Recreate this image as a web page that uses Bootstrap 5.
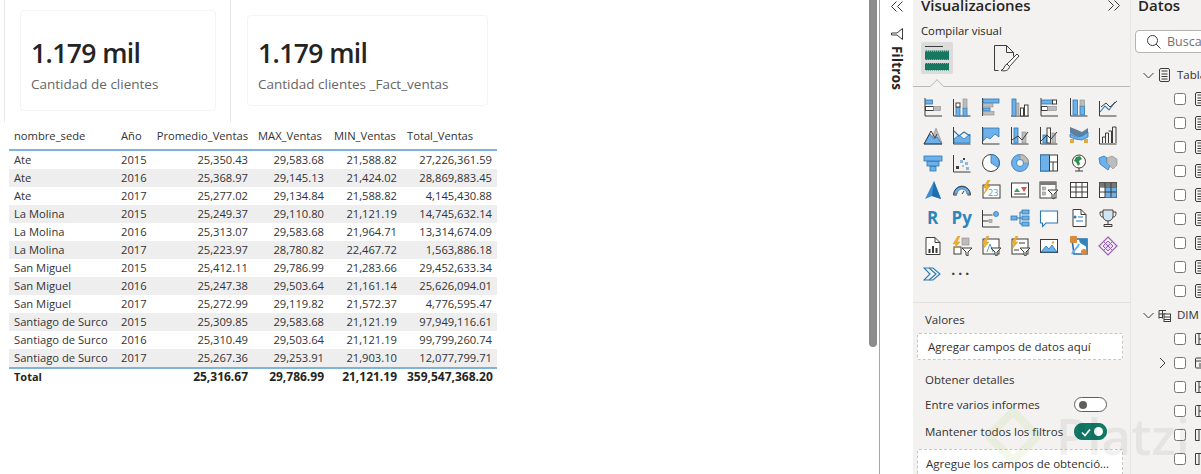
<!DOCTYPE html>
<html lang="es">
<head>
<meta charset="UTF-8">
<title>Power BI</title>
<link href="https://cdn.jsdelivr.net/npm/bootstrap@5.3.3/dist/css/bootstrap.min.css" rel="stylesheet">
<style>
    html, body { height: 474px; overflow: hidden; }
    body { font-family: "Open Sans", "Noto Sans", sans-serif; color: #252423; background: #fff; position: relative; }
    .app-wrap { height: 474px; }
    .report-area { width: 869px; height: 474px; }
    .kpi-row { height: 122px; }
    .kpi-cell-a { width: 227px; margin-left: 4px; padding: 10px 0 0 15px; border-left: 1px solid #e8e8e8; border-right: 1px solid #e4e4e4; }
    .kpi-cell-b { padding: 15px 0 0 16px; }
    .kpi-box { border: 1px solid #f4f4f4; border-radius: 4px; padding-left: 10px; }
    .kpi-cell-a .kpi-box { width: 196px; height: 101px; padding-top: 22px; }
    .kpi-cell-b .kpi-box { width: 241px; height: 91px; padding-top: 17px; }
    .kpi-num { font-size: 26.5px; line-height: 40px; font-weight: 600; color: #252423; letter-spacing: -.6px; }
    .kpi-label { font-size: 13.5px; line-height: 20px; color: #666; margin-top: 1px; }
    .sales-table { margin: 1px 0 0 9px; width: 488px; table-layout: fixed; border-collapse: collapse; font-size: 11.2px; color: #333; }
    .sales-table th, .sales-table td { padding: 0 5px; height: 18px; line-height: 18px; white-space: nowrap; border: 0; font-weight: 400; background: transparent; color: #333; box-shadow: none; }
    .sales-table thead th { height: 27px; border-bottom: 2px solid #7fb4da; padding-bottom: 0; }
    .sales-table tbody tr:nth-child(even) td { background: #eee; }
    .sales-table tfoot td { font-size: 12px; font-weight: 700; height: 16px; line-height: 15px; border-top: 2px solid #7fb4da; color: #252423; }
    .sales-table tfoot td:first-child { font-size: 11px; }
    .sales-table .w-a { width: 107px; }
    .sales-table .w-b { width: 35px; }
    .sales-table .w-c { width: 102px; }
    .sales-table .w-d { width: 76px; }
    .sales-table .w-e { width: 73px; }
    .sales-table .w-f { width: 95px; }
    .scroll-track { width: 10px; }
    .scroll-thumb { width: 8px; height: 347px; background: #8c8c8c; border-radius: 0 0 4px 4px; }
    .filter-strip { width: 34px; border-left: 1px solid #a6a6a6; }
    .strip-top { height: 11px; line-height: 10px; text-align: center; }
    .filter-word { writing-mode: vertical-rl; font-size: 13.5px; font-weight: 700; color: #252423; margin: 5px 0 0 9px; line-height: 16px; letter-spacing: .2px; }
    .viz-pane { width: 217px; background: #f3f2f1; position: relative; }
    .pane-title { font-size: 15px; line-height: 10px; height: 10px; font-weight: 600; color: #252423; }
    .viz-head { padding-left: 8px; padding-right: 9px; }
    .build-label { font-size: 11.3px; font-weight: 500; line-height: 16px; margin: 12px 0 3px 8px; }
    .build-tabs { height: 44px; margin-left: 8px; border: 0; }
    .tab-on { width: 32px; height: 32px; background: #dcdcdc; border-radius: 2px; }
    .tab-off { margin-left: 36px; width: 32px; height: 32px; }
    .tab-rule { height: 1px; background: #b9b9b9; position: relative; }
    .tab-caret { position: absolute; left: 18px; top: -6px; width: 12px; height: 12px; background: #f3f2f1; border-left: 1px solid #b9b9b9; border-top: 1px solid #b9b9b9; transform: rotate(45deg) scale(.8); }
    .viz-grid { display: grid; grid-template-columns: repeat(7, 29.2px); grid-auto-rows: 27.85px; margin: 6px 0 0 5px; height: 209px; border-bottom: 0; }
    .viz-grid > div { display: flex; align-items: center; justify-content: center; }
    .viz-ico { width: 20px; height: 20px; }
    .k { fill: none; stroke: #3d3c3b; stroke-width: 1; }
    .bl { fill: #6db0ea; stroke: #2b79b5; stroke-width: .8; }
    .gr { fill: #bcbcbc; stroke: #8b8b8b; stroke-width: .6; }
    .dk { fill: #3d3c3b; }
    .yl { fill: #f2b02e; stroke: #c88a12; stroke-width: .4; }
    .ws { fill: #fff; stroke: #3d3c3b; stroke-width: 1; }
    .bs { fill: none; stroke: #2b79b5; stroke-width: 1.1; }
    .r-ico { font-size: 17px; font-weight: 700; color: #2f84b9; line-height: 20px; font-family: "Open Sans", sans-serif; }
    .more-dots { font-size: 14px; font-weight: 700; color: #3d3c3b; letter-spacing: 3px; line-height: 14px; white-space: nowrap; }
    .sec-rule { height: 1px; background: #e1e0df; }
    .field-title { font-size: 11.5px; line-height: 16px; margin: 9px 0 5px 12px; color: #323130; }
    .drop-box { margin: 0 7px 0 4px; height: 27px; line-height: 26px; background: #fff; border: 1px dashed #c8c6c4; border-radius: 2px; font-size: 11.5px; padding-left: 10px; color: #323130; white-space: nowrap; overflow: hidden; }
    .detail-title { font-weight: 500; margin: 12px 0 0 12px; }
    .switch-row { height: 27px; margin: 0 23px 0 12px; font-size: 11.5px; color: #323130; }
    .switch-row.first { margin-top: 3px; }
    .tgl { width: 33px; height: 15px; border-radius: 8px; border: 1px solid #605e5c; background: #fff; position: relative; }
    .tgl::after { content: ""; position: absolute; left: 4px; top: 2.5px; width: 8px; height: 8px; border-radius: 50%; background: #605e5c; }
    .tgl-on { background: #117865; border-color: #117865; height: 17px; }
    .tgl-on::after { left: auto; right: 3px; top: 3px; width: 9px; height: 9px; background: #fff; }
    .tgl-on svg { position: absolute; left: 6px; top: 3.5px; width: 10px; height: 9px; }
    .last-box { margin-top: 4px; height: 40px; line-height: 27px; padding-left: 8px; }
    .data-pane { width: 71px; background: #f3f2f1; border-left: 1px solid #e6e5e4; overflow: hidden; }
    .data-pane .pane-title { margin-left: 7px; }
    .search-box { margin: 20px -20px 0 4px; height: 23px; background: #fff; border: 1px solid #b5b3b1; border-radius: 4px; font-size: 12.5px; color: #707070; line-height: 21px; padding-left: 10px; white-space: nowrap; }
    .search-box svg { width: 15px; height: 15px; margin-right: 6px; vertical-align: -3px; }
    .tree-list { margin-top: 10px; white-space: nowrap; font-size: 11.5px; color: #323130; }
    .tree-row { height: 24px; }
    .tree-head { padding-left: 12px; }
    .tree-head span { margin-left: 2px; }
    .tree-sub { padding-left: 43px; }
    .tree-sub.has-arrow { padding-left: 28px; }
    .sub-arrow { width: 7px; height: 12px; flex: none; }
    .tree-mark { width: 12px; height: 12px; margin: 0; border: 1px solid #8a8886; border-radius: 2px; background: #f8f8f8; flex: none; }
    .tree-ico { width: 13px; height: 14px; flex: none; }
    .tree-arrow { width: 11px; height: 11px; flex: none; }
    .mark-over { position: absolute; pointer-events: none; color: #000; opacity: .05; font-size: 51px; font-weight: 600; line-height: 58px; left: 1056px; top: 406px; white-space: nowrap; }
    .diamond-over { position: absolute; left: 985px; top: 408px; width: 56px; height: 56px; pointer-events: none; opacity: .1; }
</style>
</head>
<body>
<div class="d-flex app-wrap">
    <div class="report-area">
        <div class="d-flex kpi-row">
            <div class="kpi-cell-a">
                <div class="kpi-box">
                    <div class="kpi-num">1.179 mil</div>
                    <div class="kpi-label">Cantidad de clientes</div>
                </div>
            </div>
            <div class="kpi-cell-b">
                <div class="kpi-box">
                    <div class="kpi-num">1.179 mil</div>
                    <div class="kpi-label">Cantidad clientes _Fact_ventas</div>
                </div>
            </div>
        </div>
        <table class="sales-table">
            <thead>
                <tr>
                    <th class="w-a">nombre_sede</th>
                    <th class="w-b">Año</th>
                    <th class="w-c text-end">Promedio_Ventas</th>
                    <th class="w-d">MAX_Ventas</th>
                    <th class="w-e">MIN_Ventas</th>
                    <th class="w-f">Total_Ventas</th>
                </tr>
            </thead>
            <tbody class="text-end">
                <tr><td class="text-start">Ate</td><td class="text-start">2015</td><td>25,350.43</td><td>29,583.68</td><td>21,588.82</td><td>27,226,361.59</td></tr>
                <tr><td class="text-start">Ate</td><td class="text-start">2016</td><td>25,368.97</td><td>29,145.13</td><td>21,424.02</td><td>28,869,883.45</td></tr>
                <tr><td class="text-start">Ate</td><td class="text-start">2017</td><td>25,277.02</td><td>29,134.84</td><td>21,588.82</td><td>4,145,430.88</td></tr>
                <tr><td class="text-start">La Molina</td><td class="text-start">2015</td><td>25,249.37</td><td>29,110.80</td><td>21,121.19</td><td>14,745,632.14</td></tr>
                <tr><td class="text-start">La Molina</td><td class="text-start">2016</td><td>25,313.07</td><td>29,583.68</td><td>21,964.71</td><td>13,314,674.09</td></tr>
                <tr><td class="text-start">La Molina</td><td class="text-start">2017</td><td>25,223.97</td><td>28,780.82</td><td>22,467.72</td><td>1,563,886.18</td></tr>
                <tr><td class="text-start">San Miguel</td><td class="text-start">2015</td><td>25,412.11</td><td>29,786.99</td><td>21,283.66</td><td>29,452,633.34</td></tr>
                <tr><td class="text-start">San Miguel</td><td class="text-start">2016</td><td>25,247.38</td><td>29,503.64</td><td>21,161.14</td><td>25,626,094.01</td></tr>
                <tr><td class="text-start">San Miguel</td><td class="text-start">2017</td><td>25,272.99</td><td>29,119.82</td><td>21,572.37</td><td>4,776,595.47</td></tr>
                <tr><td class="text-start">Santiago de Surco</td><td class="text-start">2015</td><td>25,309.85</td><td>29,583.68</td><td>21,121.19</td><td>97,949,116.61</td></tr>
                <tr><td class="text-start">Santiago de Surco</td><td class="text-start">2016</td><td>25,310.49</td><td>29,503.64</td><td>21,121.19</td><td>99,799,260.74</td></tr>
                <tr><td class="text-start">Santiago de Surco</td><td class="text-start">2017</td><td>25,267.36</td><td>29,253.91</td><td>21,903.10</td><td>12,077,799.71</td></tr>
            </tbody>
            <tfoot class="text-end">
                <tr><td class="text-start">Total</td><td></td><td>25,316.67</td><td>29,786.99</td><td>21,121.19</td><td>359,547,368.20</td></tr>
            </tfoot>
        </table>
    </div>

    <div class="scroll-track"><div class="scroll-thumb"></div></div>

    <div class="filter-strip">
        <div class="strip-top">
            <svg width="14" height="11" viewBox="0 0 14 11"><path class="k" d="M6.5 .5l-5 5 5 5M12.5 .5l-5 5 5 5"/></svg>
        </div>
        <svg class="d-block mx-auto mt-3" width="14" height="14" viewBox="0 0 14 14"><path class="k" d="M12.5 1.500v11L7 8H1.500V6H7z"/></svg>
        <div class="filter-word">Filtros</div>
    </div>

    <div class="viz-pane">
        <div class="d-flex justify-content-between align-items-start viz-head">
            <div class="pane-title">Visualizaciones</div>
            <svg width="14" height="11" viewBox="0 0 14 11"><path class="k" d="M1.5 .5l5 5-5 5M7.5 .5l5 5-5 5"/></svg>
        </div>
        <div class="build-label">Compilar visual</div>
        <div class="d-flex build-tabs">
            <div class="tab-on">
                <svg width="32" height="32" viewBox="0 0 32 32"><path class="k" d="M4 4.500h18"/><rect x="4" y="8.500" width="24" height="9.500" fill="#17775f"/><rect x="4" y="21" width="24" height="7.500" fill="#17775f"/><path d="M4 9h24M4 18h24M4 21h24M4 28.500h24" stroke="#dcdcdc" stroke-dasharray="1 1"/></svg>
            </div>
            <div class="tab-off">
                <svg width="32" height="32" viewBox="0 0 32 32"><path class="k" d="M5.500 3.500h12l7 7v4M17.500 3.500v7h7M5.500 3.500v25h4"/><path class="ws" d="M28 12L18 22l2.500 2.500L30 14z"/><path class="k" d="M18 22c-3 1-2 5-6 6.500 4 1 8 0 8.500-4"/></svg>
            </div>
        </div>
        <div class="tab-rule"><span class="tab-caret"></span></div>

        <div class="viz-grid">
            <div><svg class="viz-ico" viewBox="0 0 20 20"><path class="k" d="M2 1v18h17"/><rect class="bl" x="2.500" y="3" width="7" height="4"/><rect class="ws" x="2.500" y="9.500" width="8" height="4"/><rect class="gr" x="10.500" y="9.500" width="7" height="4"/></svg></div>
            <div><svg class="viz-ico" viewBox="0 0 20 20"><path class="k" d="M1.500 2v17h17"/><rect class="bl" x="4" y="10" width="4" height="9"/><rect class="ws" x="4" y="6" width="4" height="4"/><rect class="bl" x="11" y="11" width="4" height="8"/><rect class="gr" x="11" y="2" width="4" height="9"/></svg></div>
            <div><svg class="viz-ico" viewBox="0 0 20 20"><path class="k" d="M1.500 1v18"/><rect class="bl" x="2" y="2" width="16" height="4"/><rect class="gr" x="2" y="6.500" width="10" height="3.500"/><rect class="bl" x="2" y="11" width="7" height="3"/><rect class="gr" x="2" y="14.500" width="11" height="3.500"/></svg></div>
            <div><svg class="viz-ico" viewBox="0 0 20 20"><path class="k" d="M1 19h18"/><rect class="bl" x="2" y="2" width="4" height="17"/><rect class="gr" x="6.500" y="6" width="2.500" height="13"/><rect class="ws" x="10.500" y="11" width="3" height="8"/><rect class="ws" x="14.500" y="8" width="3.500" height="11"/></svg></div>
            <div><svg class="viz-ico" viewBox="0 0 20 20"><path class="k" d="M2 1v18h17"/><rect class="bl" x="2.500" y="3" width="11" height="4"/><rect class="ws" x="13.500" y="3" width="4" height="4"/><rect class="ws" x="2.500" y="9.500" width="6" height="4"/><rect class="gr" x="8.500" y="9.500" width="9" height="4"/></svg></div>
            <div><svg class="viz-ico" viewBox="0 0 20 20"><path class="k" d="M1.500 1v18h17"/><rect class="bl" x="4" y="3" width="4.500" height="15"/><rect class="bl" x="11" y="9" width="4.500" height="9"/><rect class="gr" x="11" y="3" width="4.500" height="6"/></svg></div>
            <div><svg class="viz-ico" viewBox="0 0 20 20"><path class="k" d="M1.500 4v15h17"/><path class="bs" d="M2 15l5-6 4 4 6-8"/><path class="k" d="M3 10l5-4 4 4 7-6"/></svg></div>

            <div><svg class="viz-ico" viewBox="0 0 20 20"><path class="gr" d="M7 18l6-15 6 15z"/><path class="bl" d="M1 19l6-10 4 5 3-2 5 7z"/><path class="k" d="M1 19l7-13 4 7 2-4M1 19h18"/></svg></div>
            <div><svg class="viz-ico" viewBox="0 0 20 20"><path class="k" d="M1.500 2v17h17"/><path class="bl" d="M2 14l5-4 5 4 6-5v9H2z"/><path class="bs" d="M2 6l5 5 5-4 6 4"/></svg></div>
            <div><svg class="viz-ico" viewBox="0 0 20 20"><path class="k" d="M1.500 2v17h17"/><path class="bl" d="M2 3h16v9l-4-3-5 5-3-2-4 4z"/></svg></div>
            <div><svg class="viz-ico" viewBox="0 0 20 20"><path class="k" d="M1.500 2v17h17"/><rect class="bl" x="4" y="3" width="4" height="15"/><rect class="gr" x="12" y="7" width="4" height="11"/><path class="k" d="M2 15l6-4 4 4 6-8"/></svg></div>
            <div><svg class="viz-ico" viewBox="0 0 20 20"><path class="k" d="M1.500 2v17h17"/><rect class="bl" x="4" y="10" width="3.500" height="8"/><rect class="ws" x="8" y="3" width="3.500" height="15"/><rect class="gr" x="13" y="8" width="3.500" height="10"/><path class="k" d="M2 16l6-6 4 4 6-7"/></svg></div>
            <div><svg class="viz-ico" viewBox="0 0 20 20"><path d="M1 2l5 2 7 3 6-4v5l-6 5-7-2-5-3z" fill="#5f7fa0"/><path class="bl" d="M1 9l6 3 6-1 6-4v5l-6 3-7-1-5-2z"/><rect x="1" y="14" width="4" height="4" fill="#e2a93b"/><rect x="15" y="14" width="4" height="4" fill="#e2a93b"/></svg></div>
            <div><svg class="viz-ico" viewBox="0 0 20 20"><path class="k" d="M1.500 3v16M1.500 19h17M4.500 18v-6h3v6M7.500 12V8h3v10M10.500 6h3v12M14.500 18V2h3.500v16"/></svg></div>

            <div><svg class="viz-ico" viewBox="0 0 20 20"><rect class="bl" x="1" y="3" width="18" height="5"/><rect class="bl" x="4" y="8.500" width="12" height="4.500"/><rect class="bl" x="7" y="13.500" width="6" height="4.500"/></svg></div>
            <div><svg class="viz-ico" viewBox="0 0 20 20"><path class="k" d="M1.500 2v17h17"/><rect class="dk" x="4" y="13" width="3" height="3"/><rect class="dk" x="11" y="5" width="2" height="2"/><rect fill="#8db8dc" x="8" y="7" width="3" height="3"/><rect fill="#8db8dc" x="13" y="9" width="3" height="3"/><rect fill="#8db8dc" x="14" y="14" width="3" height="3"/><rect fill="#bbb" x="10" y="12" width="2" height="2"/></svg></div>
            <div><svg class="viz-ico" viewBox="0 0 20 20"><circle class="ws" cx="10" cy="10" r="8.500"/><path class="bl" d="M10 10V1.500a8.500 8.500 0 0 1 7 13z"/></svg></div>
            <div><svg class="viz-ico" viewBox="0 0 20 20"><circle class="bl" cx="10" cy="10" r="8.500"/><path class="gr" d="M10 1.500a8.500 8.500 0 0 1 8.500 8.500h-5a3.500 3.500 0 0 0-3.500-3.500z"/><circle fill="#f3f2f1" stroke="#2b79b5" stroke-width=".8" cx="10" cy="10" r="3.500"/></svg></div>
            <div><svg class="viz-ico" viewBox="0 0 20 20"><rect class="ws" x="1.500" y="2" width="17" height="16"/><rect class="bl" x="1.500" y="2" width="9" height="16"/><path class="k" d="M10.500 9h8M14 9v9M10.500 2v16"/></svg></div>
            <div><svg class="viz-ico" viewBox="0 0 20 20"><circle cx="10" cy="8.500" r="6.500" fill="#fff" stroke="#3d3c3b"/><path d="M7 4l4-1 2 3-3 2 1 3-2 2-2-4-2-1z" fill="#2f8f4f"/><path class="k" d="M6 18h8M10 15v3"/></svg></div>
            <div><svg class="viz-ico" viewBox="0 0 20 20"><path class="bl" d="M1 5l5-2 3 2v5l3 3-2 4-4-3-4-3z"/><path class="gr" d="M9 5l5-2 5 3v6l-4 4-3-3-3-3z"/></svg></div>

            <div><svg class="viz-ico" viewBox="0 0 20 20"><path d="M11 1L2 19l7-3 9 3z" fill="#3f8fd0"/><path d="M11 1L9 16l9 3z" fill="#1f6fae"/></svg></div>
            <div><svg class="viz-ico" viewBox="0 0 20 20"><path class="bl" d="M2 14a8 8 0 0 1 16 0h-3a5 5 0 0 0-10 0z"/><path class="k" d="M1.500 15a8.500 8.500 0 0 1 17 0h-3M5 15H1.500M10 14l2-3"/></svg></div>
            <div><svg class="viz-ico" viewBox="0 0 20 20"><rect class="ws" x="2" y="5" width="17" height="13"/><path class="yl" d="M7 0L2 8h3l-2 6 6-8H6l3-6z"/><text x="7" y="16" font-size="9" fill="#5e9cc9" font-family="Open Sans, sans-serif">23</text></svg></div>
            <div><svg class="viz-ico" viewBox="0 0 20 20"><rect class="ws" x="1.500" y="3" width="17" height="14"/><path d="M4 12l3-4 3 4z" fill="#3f9e5d"/><path d="M11 7h6l-3 5z" fill="#d9534f"/><path class="k" d="M4 14h12"/></svg></div>
            <div><svg class="viz-ico" viewBox="0 0 20 20"><rect class="ws" x="1" y="2" width="16" height="16"/><rect x="1" y="2" width="16" height="3" fill="#7a7a7a"/><rect class="gr" x="3.500" y="7" width="3" height="3"/><rect class="gr" x="3.500" y="12" width="3" height="3"/><path class="ws" d="M9 10h10l-4 4v5l-2-1v-4z"/></svg></div>
            <div><svg class="viz-ico" viewBox="0 0 20 20"><rect class="ws" x="1.500" y="2.500" width="17" height="15"/><path class="k" d="M1.500 7h17M1.500 12h17M7 2.500v15M13 2.500v15"/></svg></div>
            <div><svg class="viz-ico" viewBox="0 0 20 20"><rect class="ws" x="1.500" y="2.500" width="17" height="15"/><rect x="7" y="7" width="11.500" height="10.500" fill="#6db0ea"/><rect x="1.500" y="2.500" width="17" height="4" fill="#777"/><path class="k" d="M1.500 7h17M1.500 12h17M7 2.500v15M13 2.500v15"/></svg></div>

            <div><span class="r-ico">R</span></div>
            <div><span class="r-ico">Py</span></div>
            <div><svg class="viz-ico" viewBox="0 0 20 20"><path class="k" d="M1.500 2v17h17M1.500 7h10M1.500 13h6"/><circle class="bl" cx="15" cy="6" r="2.500"/><rect class="gr" x="8" y="11.500" width="3" height="3"/></svg></div>
            <div><svg class="viz-ico" viewBox="0 0 20 20"><rect class="bl" x="1" y="8" width="6" height="4"/><rect class="bl" x="12" y="2" width="7" height="4"/><rect class="bl" x="12" y="8" width="7" height="4"/><rect class="bl" x="12" y="14" width="7" height="4"/><path class="bs" d="M7 10h5M10 4h2M10 16h2M10 4v12"/></svg></div>
            <div><svg class="viz-ico" viewBox="0 0 20 20"><path d="M1.500 3h17v12H7l-3.500 3.500V15h-2z" fill="#fff" stroke="#2b79b5" stroke-width="1.100"/></svg></div>
            <div><svg class="viz-ico" viewBox="0 0 20 20"><path class="ws" d="M4 1.500h8l5 5v12H4z"/><path class="k" d="M12 1.500v5h5"/><circle fill="#2b79b5" cx="6" cy="9" r="1.500"/><path class="bs" d="M9 9h5M7 13h7"/></svg></div>
            <div><svg class="viz-ico" viewBox="0 0 20 20"><path d="M6 3h8v5a4 4 0 0 1-8 0z" fill="#cfe4f5"/><path class="k" d="M5 2h10v6a5 5 0 0 1-10 0zM5 4H2c0 4 1 5 3 5M15 4h3c0 4-1 5-3 5M10 13v3M6 18.500h8v-2H6z"/></svg></div>

            <div><svg class="viz-ico" viewBox="0 0 20 20"><path class="ws" d="M3 1.500h9l5 5v12H3z"/><path class="k" d="M12 1.500v5h5"/><rect class="dk" x="5.500" y="13" width="2" height="4"/><rect class="dk" x="9" y="10" width="2" height="7"/><rect class="dk" x="12.500" y="12" width="2" height="5"/></svg></div>
            <div><svg class="viz-ico" viewBox="0 0 20 20"><rect class="gr" x="10" y="2" width="7" height="7"/><rect class="ws" x="2" y="11" width="7" height="7"/><path class="yl" d="M6 0L1 8h3l-2 5 6-7H5l3-6z"/><path class="ws" d="M10 12h10l-4 4v4l-2-1v-3z"/></svg></div>
            <div><svg class="viz-ico" viewBox="0 0 20 20"><rect class="ws" x="2" y="3" width="16" height="15"/><path class="yl" d="M6 0L1 8h3l-2 5 6-7H5l3-6z"/><path d="M6 16l3-8 3 8" fill="none" stroke="#5e9cc9"/><path class="ws" d="M10 12h10l-4 4v4l-2-1v-3z"/></svg></div>
            <div><svg class="viz-ico" viewBox="0 0 20 20"><rect class="ws" x="2" y="3" width="16" height="15"/><path class="yl" d="M6 0L1 8h3l-2 5 6-7H5l3-6z"/><path class="k" d="M9 7h6M4 14h5"/><path class="ws" d="M10 12h10l-4 4v4l-2-1v-3z"/></svg></div>
            <div><svg class="viz-ico" viewBox="0 0 20 20"><rect class="ws" x="1.500" y="3.500" width="17" height="13"/><path class="bl" d="M2 16l5-6 3 3 3-4 5 7z"/><circle cx="14" cy="6.500" r="1.200" fill="#e2a93b"/></svg></div>
            <div><svg class="viz-ico" viewBox="0 0 20 20"><path d="M3 3h15v15H5z" fill="#fff" stroke="#1f6fae" stroke-width="1.600"/><path d="M10 3c0 6 6 5 8 9v-9z" fill="#2f84b9"/><path d="M3 18c2-5 6-6 7-10" stroke="#6db0ea" stroke-width="2" fill="none"/><rect x="1" y="0" width="7" height="7" rx="1" fill="#d98a3d"/><circle cx="15" cy="16" r="3" fill="#d98a3d"/></svg></div>
            <div><svg class="viz-ico" viewBox="0 0 20 20"><path d="M10 1l9 9-9 9-9-9z" fill="none" stroke="#9a5fb5" stroke-width="1.200"/><path d="M10 5l5 5-5 5-5-5z" fill="#e8d5f0" stroke="#9a5fb5"/><path d="M5.500 5.500l9 9M14.500 5.500l-9 9" stroke="#9a5fb5"/></svg></div>

            <div><svg class="viz-ico" viewBox="0 0 20 20"><path class="bs" d="M1 4h9l7 6-7 6H1l6-6z"/><path class="bs" d="M6 4l7 6-7 6"/></svg></div>
            <div><span class="more-dots">···</span></div>
        </div>

        <div class="sec-rule"></div>
        <div class="field-title">Valores</div>
        <div class="drop-box">Agregar campos de datos aquí</div>
        <div class="field-title detail-title">Obtener detalles</div>
        <div class="d-flex justify-content-between align-items-center switch-row first">
            <span>Entre varios informes</span><span class="tgl"></span>
        </div>
        <div class="d-flex justify-content-between align-items-center switch-row">
            <span>Mantener todos los filtros</span>
            <span class="tgl tgl-on"><svg viewBox="0 0 10 9"><path d="M1 4.500l3 3 5-6" fill="none" stroke="#fff" stroke-width="1.600"/></svg></span>
        </div>
        <div class="drop-box last-box">Agregue los campos de obtenció...</div>
    </div>

    <div class="data-pane">
        <div class="pane-title">Datos</div>
        <div class="search-box">
            <svg viewBox="0 0 15 15"><circle class="k" cx="6.500" cy="6.500" r="5"/><path class="k" d="M10 10l4.500 4.500"/></svg>Buscar
        </div>
        <div class="tree-list">
            <div class="d-flex align-items-center gap-1 tree-row tree-head">
                <svg class="tree-arrow" viewBox="0 0 11 11"><path class="k" d="M.5 3l5 5 5-5"/></svg>
                <svg class="tree-ico" viewBox="0 0 13 14"><rect class="k" x="1.500" y=".5" width="10" height="13" rx="1.500"/><path class="k" d="M3.500 3h6M3.500 6h6M3.500 8.500h6M3.500 11h6"/></svg>
                <span>Tabla</span>
            </div>
            <div class="d-flex align-items-center gap-2 tree-row tree-sub"><input class="tree-mark" type="checkbox" aria-label="medida"><svg class="tree-ico" viewBox="0 0 13 14"><rect class="k" x="1.500" y=".5" width="10" height="13" rx="1.500"/><path class="k" d="M3.500 3h6M3.500 6h6M3.500 8.500h6M3.500 11h6"/></svg></div>
            <div class="d-flex align-items-center gap-2 tree-row tree-sub"><input class="tree-mark" type="checkbox" aria-label="medida"><svg class="tree-ico" viewBox="0 0 13 14"><rect class="k" x="1.500" y=".5" width="10" height="13" rx="1.500"/><path class="k" d="M3.500 3h6M3.500 6h6M3.500 8.500h6M3.500 11h6"/></svg></div>
            <div class="d-flex align-items-center gap-2 tree-row tree-sub"><input class="tree-mark" type="checkbox" aria-label="medida"><svg class="tree-ico" viewBox="0 0 13 14"><rect class="k" x="1.500" y=".5" width="10" height="13" rx="1.500"/><path class="k" d="M3.500 3h6M3.500 6h6M3.500 8.500h6M3.500 11h6"/></svg></div>
            <div class="d-flex align-items-center gap-2 tree-row tree-sub"><input class="tree-mark" type="checkbox" aria-label="medida"><svg class="tree-ico" viewBox="0 0 13 14"><rect class="k" x="1.500" y=".5" width="10" height="13" rx="1.500"/><path class="k" d="M3.500 3h6M3.500 6h6M3.500 8.500h6M3.500 11h6"/></svg></div>
            <div class="d-flex align-items-center gap-2 tree-row tree-sub"><input class="tree-mark" type="checkbox" aria-label="medida"><svg class="tree-ico" viewBox="0 0 13 14"><rect class="k" x="1.500" y=".5" width="10" height="13" rx="1.500"/><path class="k" d="M3.500 3h6M3.500 6h6M3.500 8.500h6M3.500 11h6"/></svg></div>
            <div class="d-flex align-items-center gap-2 tree-row tree-sub"><input class="tree-mark" type="checkbox" aria-label="medida"><svg class="tree-ico" viewBox="0 0 13 14"><rect class="k" x="1.500" y=".5" width="10" height="13" rx="1.500"/><path class="k" d="M3.500 3h6M3.500 6h6M3.500 8.500h6M3.500 11h6"/></svg></div>
            <div class="d-flex align-items-center gap-2 tree-row tree-sub"><input class="tree-mark" type="checkbox" aria-label="medida"><svg class="tree-ico" viewBox="0 0 13 14"><rect class="k" x="1.500" y=".5" width="10" height="13" rx="1.500"/><path class="k" d="M3.500 3h6M3.500 6h6M3.500 8.500h6M3.500 11h6"/></svg></div>
            <div class="d-flex align-items-center gap-2 tree-row tree-sub"><input class="tree-mark" type="checkbox" aria-label="medida"><svg class="tree-ico" viewBox="0 0 13 14"><rect class="k" x="1.500" y=".5" width="10" height="13" rx="1.500"/><path class="k" d="M3.500 3h6M3.500 6h6M3.500 8.500h6M3.500 11h6"/></svg></div>
            <div class="d-flex align-items-center gap-2 tree-row tree-sub"><input class="tree-mark" type="checkbox" aria-label="medida"><svg class="tree-ico" viewBox="0 0 13 14"><rect class="k" x="1.500" y=".5" width="10" height="13" rx="1.500"/><path class="k" d="M3.500 3h6M3.500 6h6M3.500 8.500h6M3.500 11h6"/></svg></div>
            <div class="d-flex align-items-center gap-1 tree-row tree-head">
                <svg class="tree-arrow" viewBox="0 0 11 11"><path class="k" d="M.5 3l5 5 5-5"/></svg>
                <svg class="tree-ico" viewBox="0 0 13 14"><path class="k" d="M1 2.500h7M1 6h7M1 9.500h4M1 2.500v8M4.500 2.500v8"/><rect class="ws" x="6" y="6" width="6.500" height="7.500"/><path class="k" d="M6 9h6.500M6 11.500h6.500"/></svg>
                <span>DIM</span>
            </div>
            <div class="d-flex align-items-center gap-2 tree-row tree-sub"><input class="tree-mark" type="checkbox" aria-label="columna"><svg class="tree-ico" viewBox="0 0 13 14"><rect class="k" x="1.500" y="1.500" width="13" height="11" rx="1"/><path class="k" d="M5 1.500v11M5 7h9"/></svg></div>
            <div class="d-flex align-items-center gap-2 tree-row tree-sub has-arrow"><svg class="sub-arrow" viewBox="0 0 7 12"><path class="k" d="M1 1l5 5-5 5"/></svg><input class="tree-mark" type="checkbox" aria-label="columna"><svg class="tree-ico" viewBox="0 0 13 14"><rect class="k" x="1.500" y="2" width="13" height="10" rx="1"/><path class="k" d="M1.500 5h12M5 8h8M5 10h8"/></svg></div>
            <div class="d-flex align-items-center gap-2 tree-row tree-sub"><input class="tree-mark" type="checkbox" aria-label="columna"><svg class="tree-ico" viewBox="0 0 13 14"><rect class="k" x="1.500" y="1.500" width="13" height="11" rx="1"/><path class="k" d="M5 1.500v11M5 7h9"/></svg></div>
            <div class="d-flex align-items-center gap-2 tree-row tree-sub"><input class="tree-mark" type="checkbox" aria-label="columna"><svg class="tree-ico" viewBox="0 0 13 14"><rect class="k" x="1.500" y="1.500" width="13" height="11" rx="1"/><path class="k" d="M5 1.500v11M5 7h9"/></svg></div>
            <div class="d-flex align-items-center gap-2 tree-row tree-sub"><input class="tree-mark" type="checkbox" aria-label="columna"><svg class="tree-ico" viewBox="0 0 13 14"><path class="k" d="M1.500 1.500h12M1.500 1.500v11h4M5 1.500v11M8 5c3 0 0 8 3 8"/></svg></div>
            <div class="d-flex align-items-center gap-2 tree-row tree-sub"><input class="tree-mark" type="checkbox" aria-label="columna"><svg class="tree-ico" viewBox="0 0 13 14"><path class="k" d="M1.500 1.500h12M1.500 1.500v11h4M5 1.500v11M8 5c3 0 0 8 3 8"/></svg></div>
        </div>
    </div>
</div>

<svg class="diamond-over" viewBox="0 0 62 62"><path d="M31 4l27 27-27 27L4 31z" fill="none" stroke="#9bc53d" stroke-width="9"/></svg>
<div class="mark-over">Platzi</div>
</body>
</html>
